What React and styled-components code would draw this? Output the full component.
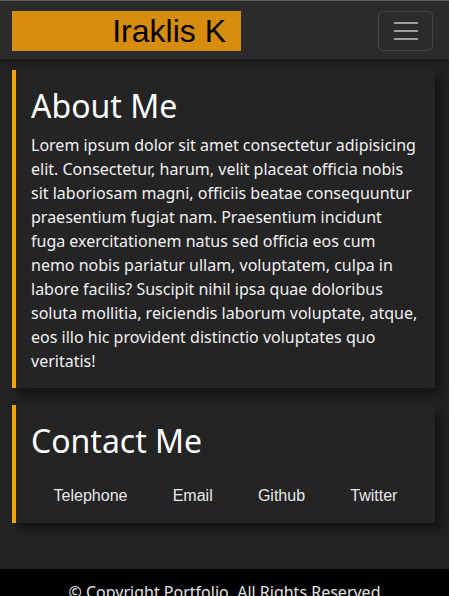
import React from "react";
import styled, { createGlobalStyle } from "styled-components";

const Global = createGlobalStyle`
  html, body { margin: 0; padding: 0; }
  body {
    background: #222222;
    font-family: "Noto Sans", "Open Sans", sans-serif;
    color: #f2f2f2;
  }
`;

const Navbar = styled.nav`
  display: flex;
  align-items: flex-start;
  justify-content: space-between;
  border-top: 1px solid #5b6067;
  background: #2b2b2b;
  height: 59px;
  box-sizing: border-box;
  padding: 10px 16px 0 12px;
  box-shadow: 0 2px 6px rgba(0, 0, 0, 0.35);
  position: relative;
  z-index: 1;
`;

const Brand = styled.a`
  display: block;
  width: 229px;
  height: 40px;
  box-sizing: border-box;
  padding: 0 15px;
  background: #d68c0f;
  color: #000;
  font-family: "Liberation Sans", Arial, sans-serif;
  font-size: 32px;
  line-height: 40px;
  text-align: right;
  text-decoration: none;
`;

const Toggler = styled.button`
  display: flex;
  align-items: center;
  justify-content: center;
  width: 55px;
  height: 40px;
  padding: 0;
  background: transparent;
  border: 1px solid rgba(255, 255, 255, 0.12);
  border-radius: 5px;
`;

const Main = styled.main`
  display: flex;
  flex-direction: column;
  gap: 17px;
  padding: 11px 14px 46px 12px;
`;

const Card = styled.section`
  background: #242424;
  border-left: 4px solid #f3a10d;
  padding: 17px 15px 15px 15px;
  box-shadow: 6px 6px 10px rgba(0, 0, 0, 0.45);
`;

const Heading = styled.h2`
  margin: 0 0 8px;
  font-size: 32px;
  font-weight: 400;
  line-height: 38px;
  color: #ffffff;
`;

const Text = styled.p`
  margin: 0;
  font-size: 16px;
  line-height: 24px;
  color: #f0f0f0;
`;

const Links = styled.ul`
  list-style: none;
  margin: 24px 0 0;
  padding: 0;
  display: flex;
  justify-content: space-around;
`;

const LinkItem = styled.li`
  font-family: "Liberation Sans", Arial, sans-serif;
  font-size: 16px;
  line-height: 24px;
  color: #e8e8e8;
`;

const Footer = styled.footer`
  background: #000;
  padding: 11px 0 12px;
  text-align: center;
  font-size: 16px;
  line-height: 24px;
  color: #e6e6e6;
`;

export default function App() {
  return (
    <>
      <Global />
      <Navbar>
        <Brand href="#">Iraklis K</Brand>
        <Toggler aria-label="menu">
          <svg width="24" height="20" viewBox="0 0 24 20">
            <g stroke="#9c9c9c" strokeWidth="2">
              <line x1="0" y1="2" x2="24" y2="2" />
              <line x1="0" y1="10" x2="24" y2="10" />
              <line x1="0" y1="18" x2="24" y2="18" />
            </g>
          </svg>
        </Toggler>
      </Navbar>
      <Main>
        <Card>
          <Heading>About Me</Heading>
          <Text>
            Lorem ipsum dolor sit amet consectetur adipisicing elit. Consectetur, harum, velit placeat officia nobis sit laboriosam magni, officiis beatae consequuntur praesentium fugiat nam. Praesentium incidunt fuga exercitationem natus sed officia eos cum nemo nobis pariatur ullam, voluptatem, culpa in labore facilis? Suscipit nihil ipsa quae doloribus soluta mollitia, reiciendis laborum voluptate, atque, eos illo hic provident distinctio voluptates quo veritatis!
          </Text>
        </Card>
        <Card>
          <Heading>Contact Me</Heading>
          <Links>
            <LinkItem>Telephone</LinkItem>
            <LinkItem>Email</LinkItem>
            <LinkItem>Github</LinkItem>
            <LinkItem>Twitter</LinkItem>
          </Links>
        </Card>
      </Main>
      <Footer>© Copyright Portfolio. All Rights Reserved</Footer>
    </>
  );
}
